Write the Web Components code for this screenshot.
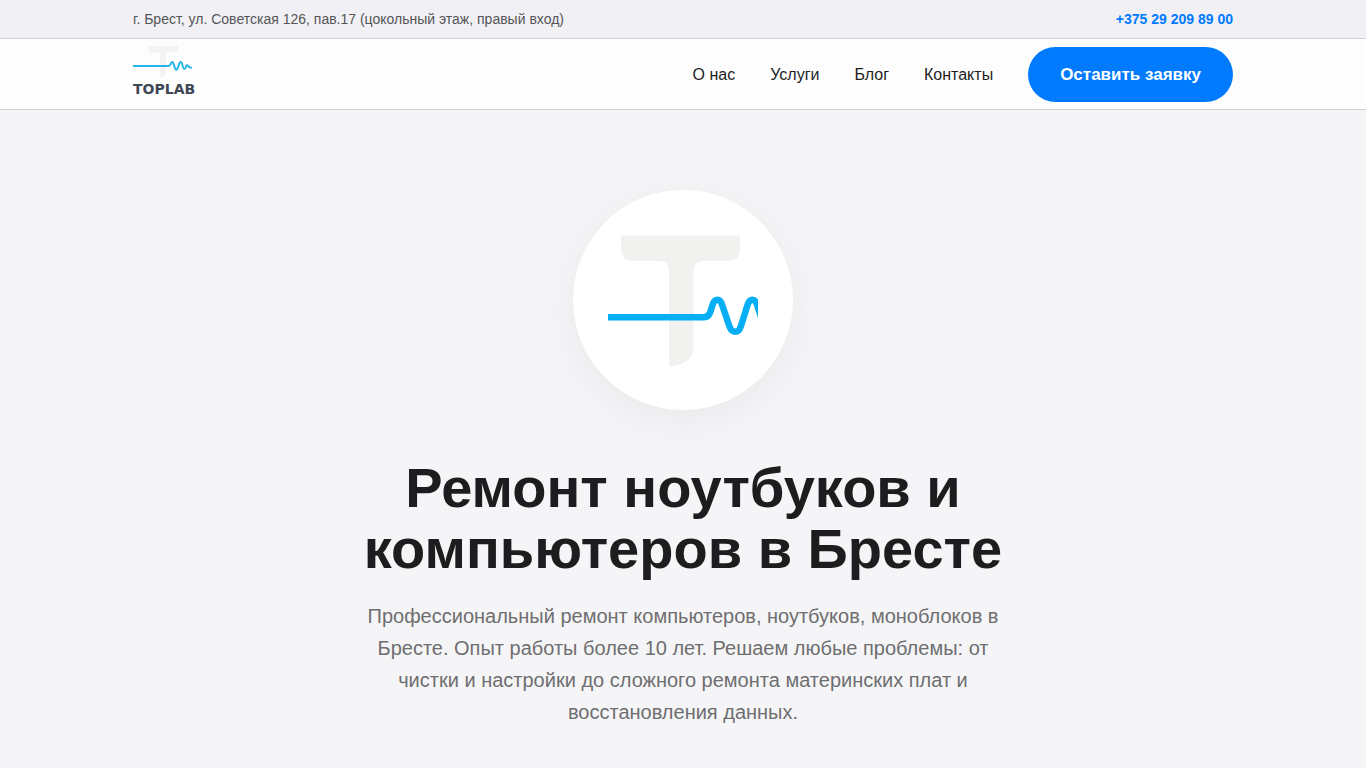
<!DOCTYPE html>
<html lang="ru">
<head>
<meta charset="utf-8">
<meta name="viewport" content="width=device-width, initial-scale=1">
<title>TOPLAB — ремонт ноутбуков и компьютеров в Бресте</title>
<style>
  body {
    margin: 0;
    background: #f5f5f7;
    color: #1d1d1f;
    font-family: "Liberation Sans", Arial, sans-serif;
    font-size: 16px;
    --accent: #007aff;
    --line: #d1d1d6;
    --content: 1100px;
  }
</style>
</head>
<body>
<top-bar>
  <span slot="address">г. Брест, ул. Советская 126, пав.17 (цокольный этаж, правый вход)</span>
  <contact-phone href="tel:+375292098900">+375 29 209 89 00</contact-phone>
</top-bar>
<site-header>
  <brand-logo slot="brand"></brand-logo>
  <nav-link href="#about">О нас</nav-link>
  <nav-link href="#services">Услуги</nav-link>
  <nav-link href="#blog">Блог</nav-link>
  <nav-link href="#contacts">Контакты</nav-link>
  <cta-button slot="action">Оставить заявку</cta-button>
</site-header>
<main>
  <hero-section>
    <logo-disc slot="emblem"></logo-disc>
    <span slot="title">Ремонт ноутбуков и компьютеров в Бресте</span>
    <span slot="lead">Профессиональный ремонт компьютеров, ноутбуков, моноблоков в Бресте. Опыт работы более 10 лет. Решаем любые проблемы: от чистки и настройки до сложного ремонта материнских плат и восстановления данных.</span>
  </hero-section>
</main>
<script>
  const define = (name, html, setup) => {
    const template = document.createElement('template');
    template.innerHTML = html;
    customElements.define(name, class extends HTMLElement {
      constructor() {
        super();
        this.attachShadow({ mode: 'open' }).append(template.content.cloneNode(true));
      }
      connectedCallback() {
        if (setup) setup(this);
      }
    });
  };

  const setHref = (el) => {
    el.shadowRoot.querySelector('a').href = el.getAttribute('href') || '#';
  };

  define('top-bar', `
    <style>
      :host { display: block; background: #f0f0f5; border-bottom: 1px solid var(--line); }
      .row {
        display: flex; justify-content: space-between; align-items: center; gap: 20px;
        max-width: var(--content); margin: 0 auto; padding: 8px 20px;
        font-size: 14px; line-height: 22px; color: #555;
      }
    </style>
    <div class="row"><slot name="address"></slot><slot></slot></div>`);

  define('contact-phone', `
    <style>
      :host { display: block; white-space: nowrap; }
      a { color: var(--accent); font-weight: 700; text-decoration: none; }
    </style>
    <a><slot></slot></a>`, setHref);

  define('site-header', `
    <style>
      :host { display: block; background: #fdfdfd; border-bottom: 1px solid var(--line); }
      .row {
        display: flex; justify-content: space-between; align-items: center; gap: 35px;
        max-width: var(--content); margin: 0 auto; padding: 5px 20px;
      }
      .menu, nav { display: flex; align-items: center; gap: 35px; }
    </style>
    <header class="row">
      <slot name="brand"></slot>
      <div class="menu"><nav><slot></slot></nav><slot name="action"></slot></div>
    </header>`);

  define('nav-link', `
    <style>
      :host { display: block; white-space: nowrap; line-height: 25px; }
      a { color: inherit; text-decoration: none; }
    </style>
    <a><slot></slot></a>`, setHref);

  define('cta-button', `
    <style>
      :host { display: block; }
      button {
        display: block; border: 0; border-radius: 28px; padding: 18px 32px;
        background: var(--accent); color: #fff; font: 700 17px/19px "Liberation Sans", Arial, sans-serif;
        white-space: nowrap; cursor: pointer;
      }
    </style>
    <button type="button"><slot></slot></button>`);

  define('brand-logo', `
    <style>
      :host { display: block; height: 60px; }
      a { display: block; text-decoration: none; color: #3c4654; }
      svg { display: block; }
      span { display: block; font: 700 14px/18px "DejaVu Sans", sans-serif; }
    </style>
    <a href="#">
      <svg width="66" height="36" viewBox="0 0 66 36" aria-hidden="true">
        <path fill="#f3f3f2" d="M15.500 2H45V5.500Q45 8.500 42 8.500H35Q33 8.500 33 10.500V28Q33 33 27 33V10.500Q27 8.500 25 8.500H18.500Q15.500 8.500 15.500 5.500Z"/>
        <path fill="none" stroke="#27b5ea" stroke-width="2" stroke-linecap="round" stroke-linejoin="round" d="M0 22H35.500C38 22 37.500 18 39.300 18S41.300 25.700 43.300 25.700S45.700 18 47.700 18S49.500 25 51.300 25S52.700 21.300 54 21.300S55.500 23.800 58 23.700"/>
      </svg>
      <span>TOPLAB</span>
    </a>`);

  define('logo-disc', `
    <style>
      :host {
        display: grid; place-items: center; width: 220px; height: 220px;
        border-radius: 50%; background: #fff; box-shadow: 0 10px 40px rgba(0, 0, 0, .05);
      }
      svg { display: block; }
    </style>
    <svg width="150" height="150" viewBox="0 0 150 150" role="img" aria-label="TOPLAB">
      <path fill="#f1f1ef" d="M13 10.500H132V23Q132 36 119 36H95Q85.500 36 85.500 46V123C85.500 134 74 141.300 61 141.300V46Q61 36 52 36H26Q13 36 13 23Z"/>
      <path fill="none" stroke="#06aff5" stroke-width="6.500" d="M0 92.300H96C99.500 92.300 101.200 90.500 102.300 87L104.700 79.500C106.800 73 112 73 114 79.500L121.500 101.500C124 108.500 130.500 108.500 132.800 101.500L139.700 79.500C141.800 73 147 73 149 79.500L153 92"/>
    </svg>`);

  define('hero-section', `
    <style>
      :host { display: block; padding: 80px 20px 40px; }
      section {
        display: flex; flex-direction: column; align-items: center;
        max-width: 700px; margin: 0 auto; text-align: center;
      }
      h1 { margin: 47px 0 21px; font-size: 56px; line-height: 61px; font-weight: 700; }
      p { max-width: 650px; margin: 0; font-size: 20px; line-height: 32px; color: #6e6e70; }
    </style>
    <section>
      <slot name="emblem"></slot>
      <h1><slot name="title"></slot></h1>
      <p><slot name="lead"></slot></p>
    </section>`);
</script>
</body>
</html>
